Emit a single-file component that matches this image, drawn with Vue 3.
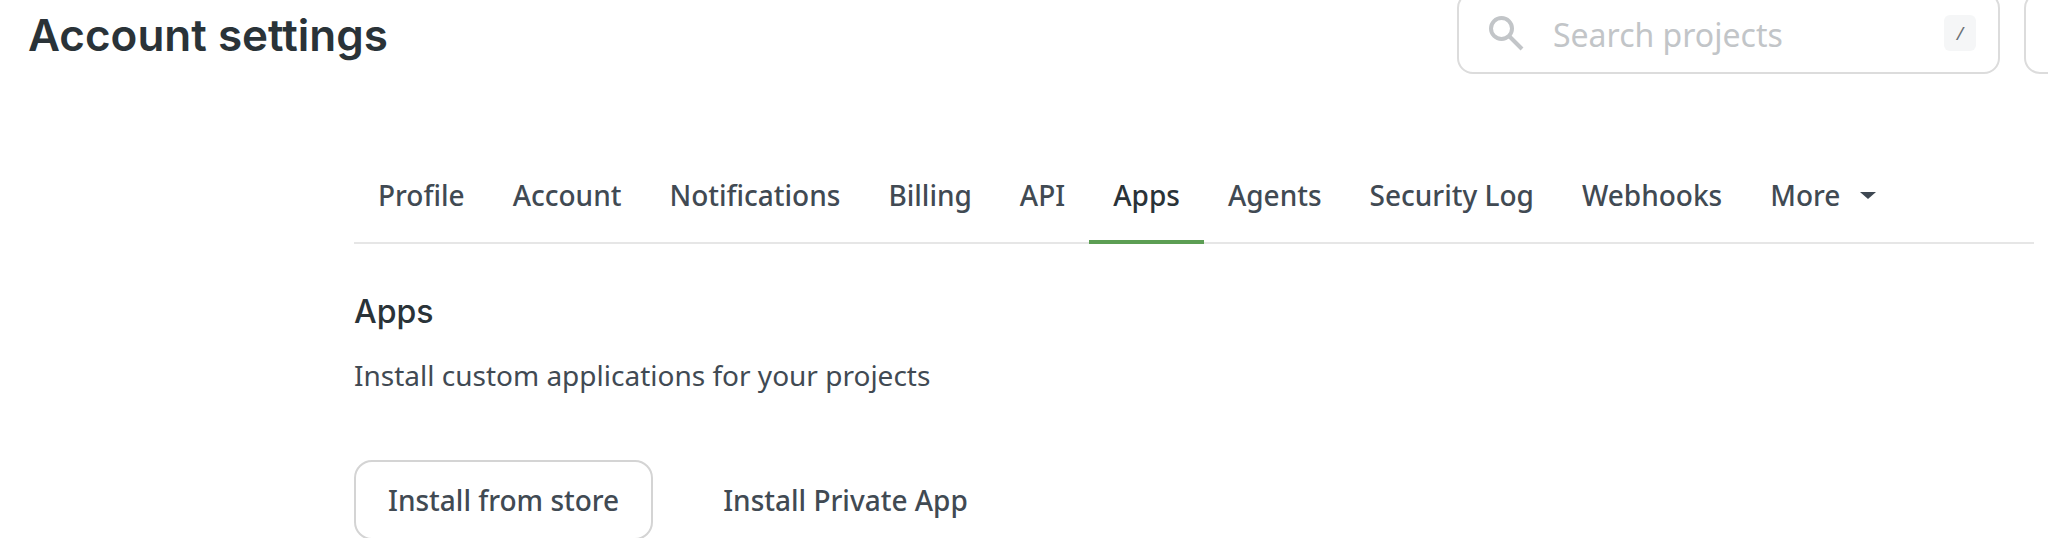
<script setup>
const tabs = ['Profile', 'Account', 'Notifications', 'Billing', 'API', 'Apps', 'Agents', 'Security Log', 'Webhooks']
</script>

<template>
  <div class="page">
    <header class="header">
      <h1 class="title">Account settings</h1>
      <div class="tools">
        <div class="search">
          <svg class="search-icon" viewBox="0 0 36 36" fill="none" stroke="#c2c5c8" stroke-width="4">
            <circle cx="12.5" cy="13.5" r="10.5" />
            <path d="M20 21 L33 34" />
          </svg>
          <span class="placeholder">Search projects</span>
          <span class="kbd">/</span>
        </div>
        <div class="next-box"></div>
      </div>
    </header>
    <main class="content">
      <nav class="tabs">
        <a v-for="t in tabs" :key="t" class="tab" :class="{ active: t === 'Apps' }">{{ t }}</a>
        <a class="tab more">More <span class="caret"></span></a>
      </nav>
      <h2 class="section">Apps</h2>
      <p class="desc">Install custom applications for your projects</p>
      <div class="actions">
        <button class="btn outlined">Install from store</button>
        <button class="btn">Install Private App</button>
      </div>
    </main>
  </div>
</template>

<style scoped>
.page {
  width: 2048px;
  height: 538px;
  overflow: hidden;
  background: #fff;
  font-family: "Noto Sans", sans-serif;
  color: #3e4852;
}
.header {
  display: flex;
  justify-content: space-between;
  align-items: center;
  margin-top: -8px;
  height: 82px;
  padding-left: 28px;
}
.title {
  margin: 4px 0 0;
  font-family: Inter, sans-serif;
  font-size: 44px;
  font-weight: 600;
  color: #2a3338;
}
.tools {
  display: flex;
  gap: 24px;
  width: 591px;
  flex: none;
}
.search {
  flex: none;
  box-sizing: border-box;
  width: 543px;
  height: 82px;
  border: 2px solid #dcdcdc;
  border-radius: 16px;
  display: flex;
  align-items: center;
  padding-left: 30px;
  padding-right: 22px;
}
.search-icon {
  width: 36px;
  height: 36px;
  flex: none;
}
.placeholder {
  margin-left: 28px;
  padding-top: 2px;
  font-size: 32px;
  color: #c2c5c8;
  flex: 1;
}
.kbd {
  width: 32px;
  height: 36px;
  border-radius: 6px;
  background: #f5f6f7;
  color: #6b7075;
  font-size: 18px;
  font-style: italic;
  display: flex;
  align-items: center;
  justify-content: center;
}
.next-box {
  flex: none;
  width: 60px;
  height: 82px;
  box-sizing: border-box;
  border: 2px solid #dcdcdc;
  border-radius: 16px;
}
.content {
  margin-left: 354px;
  width: 1680px;
}
.tabs {
  display: flex;
  margin-top: 85px;
  height: 83px;
  border-bottom: 2px solid #e6e6e6;
}
.tab {
  box-sizing: border-box;
  padding: 0 24px;
  font-size: 28px;
  line-height: 72px;
  height: 85px;
  font-weight: 500;
  color: #414a53;
  white-space: nowrap;
}
.tab.active {
  color: #2a3338;
  border-bottom: 4px solid #5c9e54;
}
.more {
  display: flex;
  align-items: center;
  gap: 20px;
  height: 72px;
}
.caret {
  width: 0;
  height: 0;
  border-left: 8px solid transparent;
  border-right: 8px solid transparent;
  border-top: 7px solid #3e4852;
}
.section {
  margin: 48px 0 0;
  font-family: Inter, sans-serif;
  font-size: 32px;
  line-height: 40px;
  font-weight: 550;
  color: #2a3338;
}
.desc {
  margin: 22px 0 0;
  font-size: 28px;
  line-height: 42px;
  color: #414a53;
}
.actions {
  display: flex;
  margin-top: 64px;
}
.btn {
  height: 80px;
  padding: 0 32px;
  border: 2px solid transparent;
  border-radius: 18px;
  background: none;
  font-family: "Noto Sans", sans-serif;
  font-size: 28px;
  font-weight: 500;
  color: #414a53;
}
.outlined {
  border-color: #d4d4d4;
  margin-right: 36px;
}
</style>

<style>
html, body { margin: 0; overflow: hidden; }
</style>
